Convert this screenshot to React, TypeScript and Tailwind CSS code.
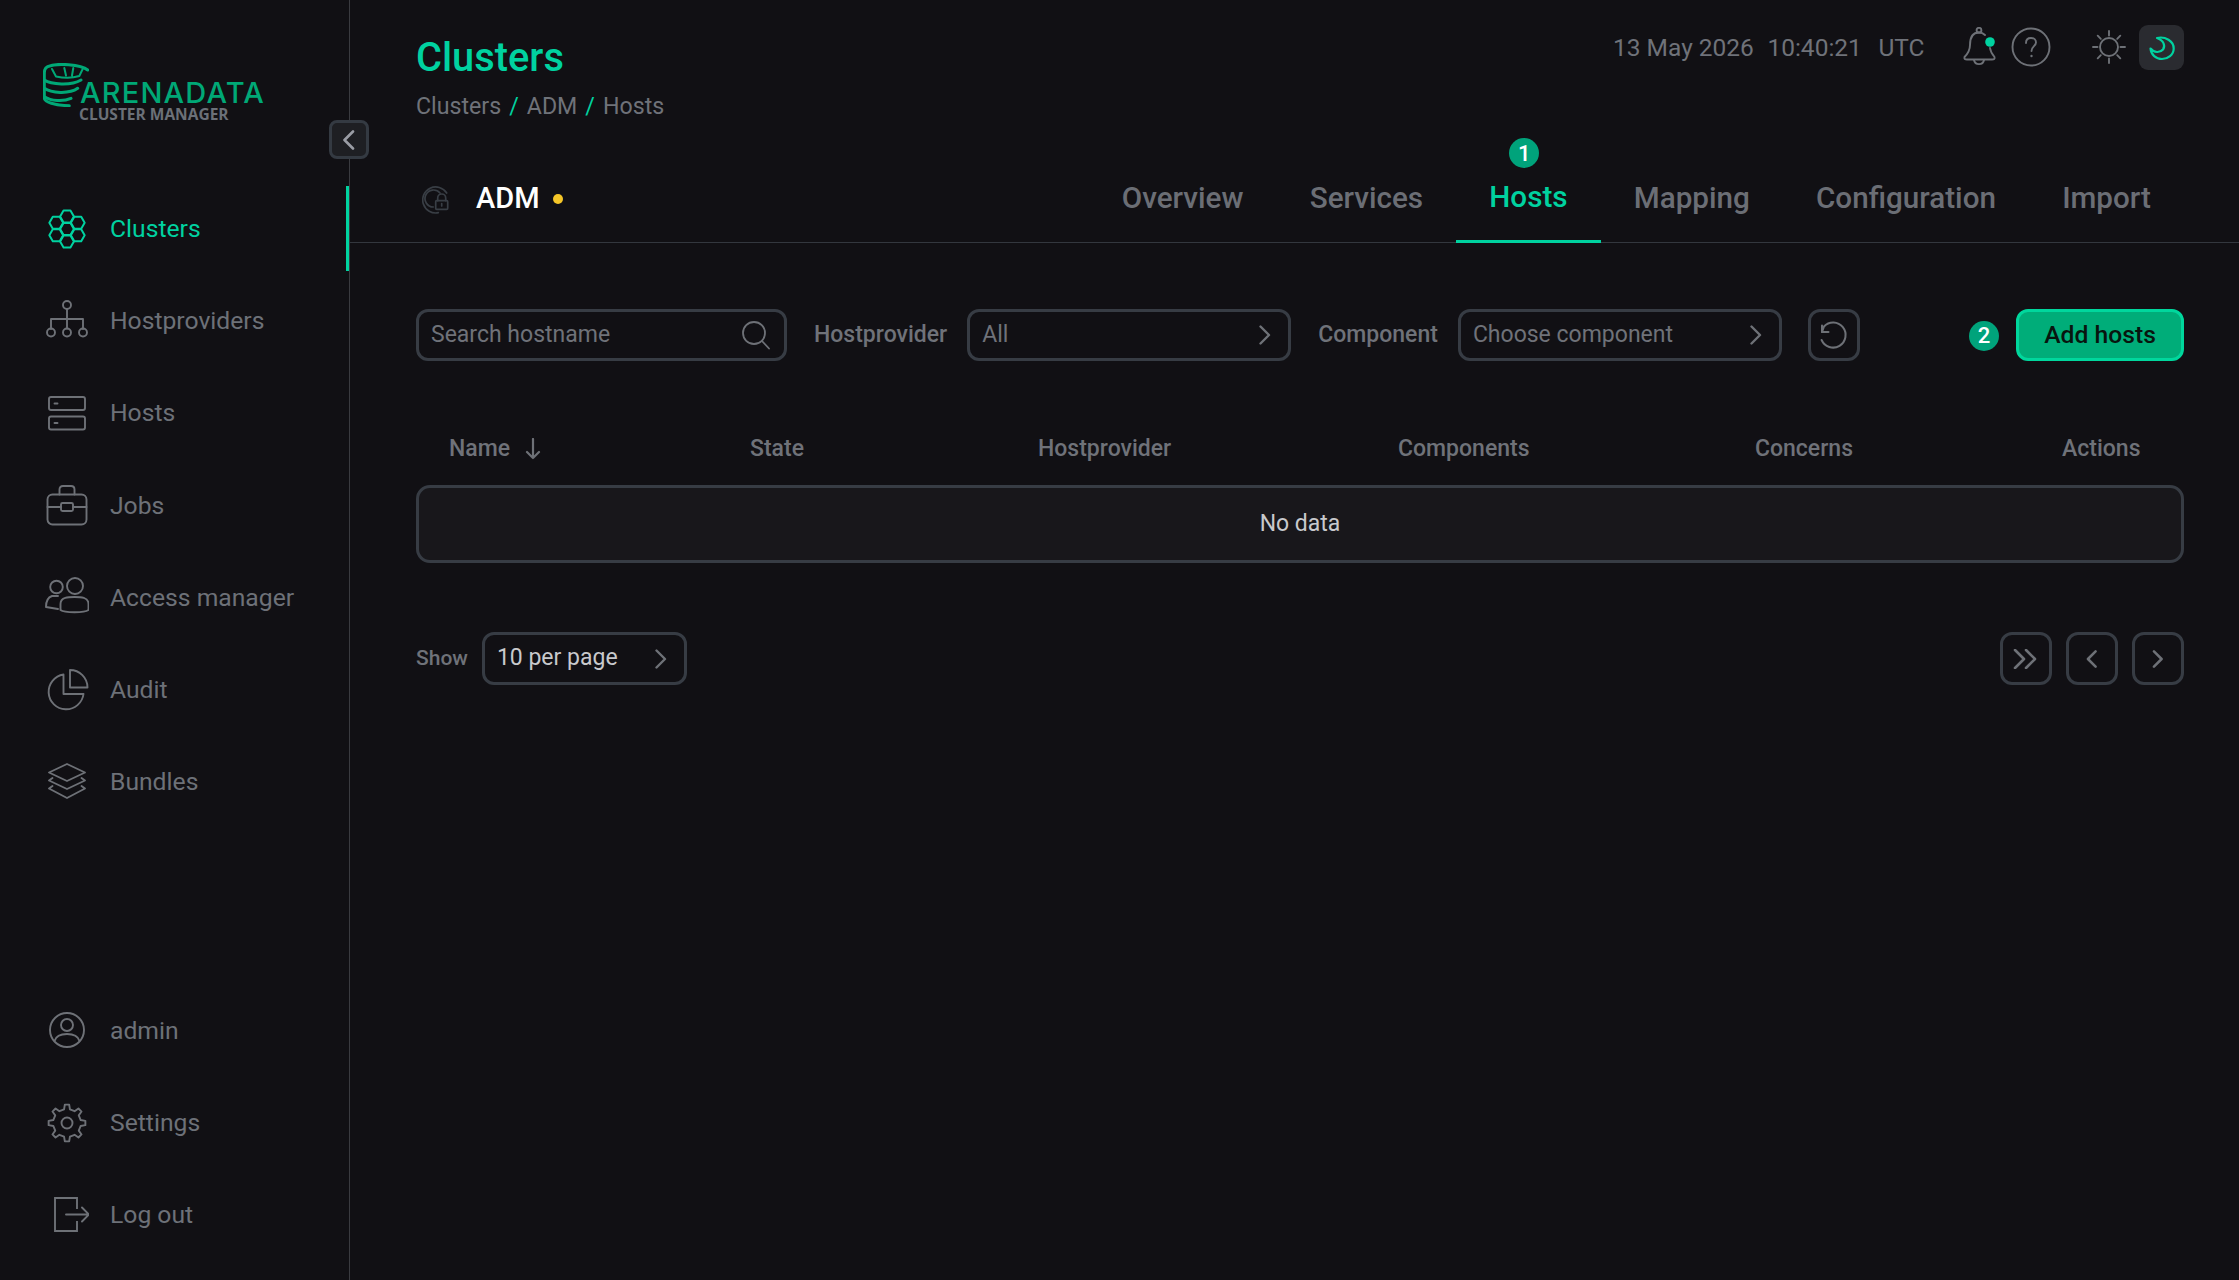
import React from "react";

const hexPoints = (cx: number, cy: number, r: number) =>
  [0, 60, 120, 180, 240, 300]
    .map((a) => `${(cx + r * Math.cos((a * Math.PI) / 180)).toFixed(2)},${(cy + r * Math.sin((a * Math.PI) / 180)).toFixed(2)}`)
    .join(" ");

const gearPath = (cx: number, cy: number, ro: number, ri: number, teeth: number) => {
  const pts: string[] = [];
  const step = (Math.PI * 2) / teeth;
  for (let i = 0; i < teeth; i++) {
    const a = i * step - Math.PI / 2;
    const list: [number, number][] = [
      [a - step * 0.27, ri],
      [a - step * 0.15, ro],
      [a + step * 0.15, ro],
      [a + step * 0.27, ri],
    ];
    list.forEach(([ang, rad]) => pts.push(`${(cx + rad * Math.cos(ang)).toFixed(2)} ${(cy + rad * Math.sin(ang)).toFixed(2)}`));
  }
  return `M${pts.join("L")}Z`;
};

const Ico = ({ children, color = "#6e7177", w = 1.9 }: { children: React.ReactNode; color?: string; w?: number }) => (
  <svg width="44" height="44" viewBox="0 0 44 44" fill="none" stroke={color} strokeWidth={w} strokeLinecap="round" strokeLinejoin="round" className="shrink-0">
    {children}
  </svg>
);

const ClustersIcon = () => (
  <Ico color="#00d2a0" w={2}>
    {[[0, 0], [0, -12.4], [0, 12.4], [10.75, -6.2], [10.75, 6.2], [-10.75, -6.2], [-10.75, 6.2]].map(([x, y], i) => (
      <polygon key={i} points={hexPoints(22 + x, 22 + y, 6.9)} />
    ))}
  </Ico>
);
const ProvidersIcon = () => (
  <Ico>
    <circle cx="22" cy="6" r="4" />
    <path d="M22 10V29.5M6 30V20H38V30" />
    <circle cx="6" cy="33.5" r="4" />
    <circle cx="22" cy="33.5" r="4" />
    <circle cx="38" cy="33.5" r="4" />
  </Ico>
);
const HostsIcon = () => (
  <Ico>
    <rect x="4" y="6" width="36" height="13" rx="2" />
    <rect x="4" y="25.5" width="36" height="13" rx="2" />
    <path d="M9.5 12.5H12.5M9.5 32H12.5" />
  </Ico>
);
const JobsIcon = () => (
  <Ico>
    <rect x="2.5" y="11.5" width="39" height="30" rx="5" />
    <path d="M14.5 11.5V6.5Q14.5 3 18 3H26Q29.5 3 29.5 6.5V11.5M2.5 24H16M28 24H41.5" />
    <rect x="16" y="20" width="12" height="8" rx="1.5" />
  </Ico>
);
const AccessIcon = () => (
  <Ico>
    <circle cx="30" cy="11" r="8" />
    <path d="M16 29C16 22 24 22 30 22C36 22 44 22 44 29V35C40 38 20 38 16 35Z" transform="translate(-0.5 0)" />
    <circle cx="11.5" cy="12" r="6.3" />
    <path d="M13 21H7Q1 23 1 32L13 34" />
  </Ico>
);
const AuditIcon = () => (
  <Ico>
    <path d="M18.5 7.5A17.5 17.5 0 1 0 38.5 27H18.5Z" />
    <path d="M25 3V20.5H42.5A17.5 17.5 0 0 0 25 3Z" />
  </Ico>
);
const BundlesIcon = () => (
  <Ico>
    <path d="M22 4L40 12.5L22 21L4 12.5Z" />
    <path d="M7.5 18L4 20.5L22 29L40 20.5L36.5 18" />
    <path d="M7.5 26L4 28.5L22 38L40 28.5L36.5 26" />
  </Ico>
);
const AdminIcon = () => (
  <Ico>
    <circle cx="22" cy="22" r="17" />
    <circle cx="22" cy="17" r="6" />
    <path d="M9.5 33C11 28 16 26 22 26C28 26 33 28 34.5 33" />
  </Ico>
);
const SettingsIcon = () => (
  <Ico>
    <path d={gearPath(22, 22, 18.5, 14, 8)} />
    <circle cx="22" cy="22" r="5.5" />
  </Ico>
);
const LogoutIcon = () => (
  <Ico>
    <path strokeLinecap="butt" strokeLinejoin="miter" d="M32 16V5H10V38H32V28" />
    <path d="M21 21.5H44M37 14.5L44 21.5L37 28.5" />
  </Ico>
);

const Chevron = ({ dir = "right", size = 20, color = "#6e7177", w = 2.4 }: { dir?: "right" | "left"; size?: number; color?: string; w?: number }) => (
  <svg width={size} height={size} viewBox="0 0 20 20" fill="none" stroke={color} strokeWidth={w} strokeLinecap="round" strokeLinejoin="round" className="shrink-0">
    <path d={dir === "right" ? "M5.5 1.5L14 10L5.5 18.5" : "M14 1.5L5.5 10L14 18.5"} />
  </svg>
);

const Logo = () => (
  <div className="relative w-[222px] h-[58px]">
    <svg width="46" height="44" viewBox="0 0 46 44" fill="none" stroke="#00a876" strokeWidth="3" strokeLinecap="round" strokeLinejoin="round" className="absolute left-0 top-0">
      <path d="M44.7 7C38 1.5 14 -0.5 4.7 3.7C1.3 5.5 1.3 8 1.3 12V35C1.3 39 12 42.5 26.3 42.7" />
      <path d="M1.3 17C8 21.5 28 23 38 17" />
      <path d="M1.3 25.3C8 30 26 31.5 34.7 25.3" />
      <path d="M1.3 33.7C8 38 20 39 28 35.3" />
      <path d="M9 6L13 13.5C20 15 30 15 36.3 13L39.7 6M21.3 5L23 12.5M30.3 5L29 12.5" strokeWidth="2" />
    </svg>
    <span className="absolute left-[37px] top-[16px] text-[29px] leading-[28px] font-medium tracking-[1.2px] text-[#00a876] font-['Inter','Liberation_Sans',sans-serif]">ARENADATA</span>
    <span className="absolute left-[36px] top-[43px] text-[15.5px] leading-[16px] font-bold text-[#6b7078] font-['Open_Sans','Liberation_Sans',sans-serif]">CLUSTER MANAGER</span>
  </div>
);

const NavItem = ({ icon, label, active }: { icon: React.ReactNode; label: string; active?: boolean }) => (
  <div className={`relative flex items-center h-[85px] pl-[45px] gap-[21px] text-[24.7px] ${active ? "text-[#00d2a0]" : "text-[#6d7178]"}`}>
    {icon}
    <span>{label}</span>
    {active && <span className="absolute right-0 top-0 bottom-0 w-[3px] bg-[#00d2a0]" />}
  </div>
);

const Select = ({ text, w, color = "text-[#6f7279]" }: { text: string; w: string; color?: string }) => (
  <div className={`flex items-center justify-between border-[3px] border-[#373c44] rounded-[12px] h-[52px] pl-[12px] pr-[13px] text-[23px] ${w} ${color}`}>
    <span>{text}</span>
    <Chevron />
  </div>
);

const PageBtn = ({ children }: { children: React.ReactNode }) => (
  <div className="flex items-center justify-center w-[52px] h-[53px] border-[3px] border-[#373c44] rounded-[12px]">{children}</div>
);

const Badge = ({ n, className = "" }: { n: string; className?: string }) => (
  <span className={`flex items-center justify-center w-[30px] h-[30px] rounded-full bg-[#00a37b] text-white text-[22px] font-medium ${className}`}>{n}</span>
);

export default function App() {
  return (
    <div className="flex w-full h-screen min-h-[1280px] bg-[#111014] font-['Roboto',sans-serif] overflow-hidden">
      <aside className="relative flex flex-col justify-between w-[350px] shrink-0 border-r border-[#3a3b40]">
        <div>
          <div className="h-[186px] pl-[43px] pt-[63px]">
            <Logo />
          </div>
          <button className="absolute left-[329px] top-[120px] flex items-center justify-center w-[40px] h-[39px] rounded-[8px] border-[3px] border-[#343a42] bg-[#1e1f23]">
            <Chevron dir="left" color="#9a9da5" w={2.6} size={20} />
          </button>
          <nav className="flex flex-col gap-[7.2px]">
            <NavItem active icon={<ClustersIcon />} label="Clusters" />
            <NavItem icon={<ProvidersIcon />} label="Hostproviders" />
            <NavItem icon={<HostsIcon />} label="Hosts" />
            <NavItem icon={<JobsIcon />} label="Jobs" />
            <NavItem icon={<AccessIcon />} label="Access manager" />
            <NavItem icon={<AuditIcon />} label="Audit" />
            <NavItem icon={<BundlesIcon />} label="Bundles" />
          </nav>
        </div>
        <div className="flex flex-col gap-[7.3px] pb-[22.5px]">
          <NavItem icon={<AdminIcon />} label="admin" />
          <NavItem icon={<SettingsIcon />} label="Settings" />
          <NavItem icon={<LogoutIcon />} label="Log out" />
        </div>
      </aside>

      <main className="flex-1 min-w-0 flex flex-col">
        <header className="flex justify-between h-[130px] pl-[66px] pr-[55px]">
          <div className="pt-[33px]">
            <h1 className="text-[39.8px] leading-[50px] font-medium text-[#00d2a0]">Clusters</h1>
            <div className="flex items-center gap-[8px] mt-[8px] text-[23.2px] leading-[30px] text-[#6f7279]">
              <span>Clusters</span>
              <span className="text-[#00d2a0]">/</span>
              <span>ADM</span>
              <span className="text-[#00d2a0]">/</span>
              <span>Hosts</span>
            </div>
          </div>
          <div className="flex items-start pt-[25px]">
            <div className="flex items-center h-[46px] gap-[13.5px] text-[24.5px] text-[#6f7279]">
              <span>13 May 2026</span>
              <span>10:40:21</span>
              <span className="ml-[3px]">UTC</span>
            </div>
            <svg width="36" height="40" viewBox="0 0 36 40" fill="none" stroke="#6e7177" strokeWidth="1.9" strokeLinecap="round" strokeLinejoin="round" className="ml-[36px] mt-[2px]">
              <path d="M18 5.5C10 5.5 9 12 9 18C9 24 6.5 27 3.5 30C3 32 4 32.5 6 32.5H31C33 32.5 34 32 33.5 30C31 27 29.5 25 29 21" />
              <path d="M18 5.5C20.5 5.5 22.5 6.5 24 8" />
              <circle cx="18" cy="3.2" r="2.4" />
              <path d="M13 33C14 38.5 22 38.5 23 33" />
              <circle cx="29" cy="15" r="4.8" fill="#00d2a0" stroke="none" />
            </svg>
            <svg width="40" height="40" viewBox="0 0 40 40" fill="none" stroke="#6e7177" strokeWidth="1.9" strokeLinecap="round" strokeLinejoin="round" className="ml-[14px] mt-[2px]">
              <circle cx="20" cy="20" r="18.5" />
              <path d="M15 16C15 12.5 17.2 11 20 11C23 11 25 13 25 15.5C25 19 20.5 19.5 20.5 24" />
              <circle cx="20.5" cy="29" r="1.2" fill="#6e7177" stroke="none" />
            </svg>
            <svg width="36" height="36" viewBox="0 0 36 36" fill="none" stroke="#6e7177" strokeWidth="1.9" strokeLinecap="round" className="ml-[40.5px] mt-[4px]">
              <circle cx="18" cy="18" r="9" />
              <path d="M18 2V6.5M18 29.5V34M2 18H6.5M29.5 18H34M6.7 6.7L9.8 9.8M26.2 26.2L29.3 29.3M29.3 6.7L26.2 9.8M9.8 26.2L6.7 29.3" />
            </svg>
            <div className="ml-[12px] flex items-center justify-center w-[45px] h-[45px] rounded-[9px] bg-[#2a2b30]">
              <svg width="30" height="30" viewBox="0 0 30 30" fill="none" stroke="#00d2a0" strokeWidth="2.2" strokeLinecap="round" strokeLinejoin="round">
                <path d="M10 5C18 3 27 8 26.7 15.7C26.5 22 21 26 15 26C9 26 4 22 3.5 15.5C7 20 13 20 16 16.5C18.5 13 17 7.5 10 5Z" />
              </svg>
            </div>
          </div>
        </header>

        <div className="flex items-stretch justify-between h-[113px] pl-[66px] pr-[55px] border-b border-[#33373e]">
          <div className="flex items-center pt-[26px]">
            <svg width="30" height="30" viewBox="0 0 30 30" fill="none" stroke="#393e45" strokeWidth="1.7" strokeLinecap="round" className="ml-[6px] mt-[1px]">
              <path d="M24.7 8A13 13 0 1 0 16.3 27.7" />
              <path d="M18 8A8.5 8.5 0 1 0 11.3 22" />
              <rect x="13.7" y="15.7" width="12" height="8.6" rx="1" />
              <path d="M15.7 15.7V13A4 4 0 0 1 23.7 13V15.7M19.7 18.5V21" />
            </svg>
            <span className="ml-[24px] text-[29px] font-medium text-white">ADM</span>
            <span className="ml-[13px] w-[10px] h-[10px] rounded-full bg-[#f5c628]" />
          </div>
          <nav className="flex items-stretch text-[29.65px] font-medium text-[#6b6e75]">
            {["Overview", "Services", "Hosts", "Mapping", "Configuration", "Import"].map((t) => (
              <div key={t} className={`relative flex items-center pt-[24px] px-[33.1px] ${t === "Hosts" ? "text-[#00d2a0] border-b-[3px] border-[#00d2a0] mb-[-1px]" : ""}`}>
                {t === "Hosts" && <Badge n="1" className="absolute left-[53px] top-[8px]" />}
                {t}
              </div>
            ))}
          </nav>
        </div>

        <div className="pl-[66px] pr-[55px]">
          <div className="flex items-center pt-[66px]">
            <div className="flex items-center justify-between w-[371px] h-[52px] border-[3px] border-[#373c44] rounded-[12px] pl-[12px] pr-[13px] text-[23px] text-[#6f7279]">
              <span>Search hostname</span>
              <svg width="30" height="30" viewBox="0 0 30 30" fill="none" stroke="#6e7177" strokeWidth="1.8" strokeLinecap="round">
                <circle cx="13" cy="13" r="11" />
                <path d="M21 21L28 28.5" />
              </svg>
            </div>
            <span className="ml-[27px] text-[23px] font-medium text-[#6f7279]">Hostprovider</span>
            <Select text="All" w="w-[324px] ml-[20px]" />
            <span className="ml-[27px] text-[23px] font-medium text-[#6f7279]">Component</span>
            <Select text="Choose component" w="w-[324px] ml-[20px]" />
            <div className="ml-[26px] flex items-center justify-center w-[52px] h-[52px] border-[3px] border-[#373c44] rounded-[12px]">
              <svg width="30" height="30" viewBox="0 0 30 30" fill="none" stroke="#6e7177" strokeWidth="2" strokeLinecap="round" strokeLinejoin="round">
                <path d="M2.6 20A12.5 12.5 0 1 0 5 6.5L3 12" />
                <path d="M3 5.5V12H9.5" />
              </svg>
            </div>
            <Badge n="2" className="ml-[auto] mr-[17px] mt-[1px]" />
            <button className="w-[168px] h-[52px] rounded-[12px] border-[3px] border-[#00d79d] bg-[#00ad79] text-[24.7px] font-medium text-[#08150f]">Add hosts</button>
          </div>

          <div className="grid grid-cols-[334px_288px_360px_357px_307px_1fr] items-center h-[124px] pt-[52px] text-[23px] font-medium text-[#6f7279]">
            <div className="flex items-center gap-[15px] pl-[33px]">
              <span>Name</span>
              <svg width="16" height="22" viewBox="0 0 16 22" fill="none" stroke="#6e7177" strokeWidth="2.2" strokeLinecap="round" strokeLinejoin="round">
                <path d="M8 1V20M2 14L8 20L14 14" />
              </svg>
            </div>
            <div>State</div>
            <div>Hostprovider</div>
            <div>Components</div>
            <div>Concerns</div>
            <div>Actions</div>
          </div>

          <div className="flex items-center justify-center h-[78px] bg-[#18171b] border-[3px] border-[#373c44] rounded-[14px] text-[23px] text-[#c8c9cc]">No data</div>

          <div className="flex items-center justify-between mt-[69px]">
            <div className="flex items-center">
              <span className="text-[21px] font-medium text-[#6f7279]">Show</span>
              <div className="ml-[14px]">
                <Select text="10 per page" w="w-[205px] !h-[53px]" color="text-[#c8c9cc]" />
              </div>
            </div>
            <div className="flex gap-[14px]">
              <PageBtn>
                <svg width="26" height="20" viewBox="0 0 26 20" fill="none" stroke="#6e7177" strokeWidth="2.6" strokeLinecap="round" strokeLinejoin="round">
                  <path d="M2 1L11 10L2 19M13 1L22 10L13 19" />
                </svg>
              </PageBtn>
              <PageBtn>
                <Chevron dir="left" size={18} w={2.8} />
              </PageBtn>
              <PageBtn>
                <Chevron size={18} w={2.8} />
              </PageBtn>
            </div>
          </div>
        </div>
      </main>
    </div>
  );
}
